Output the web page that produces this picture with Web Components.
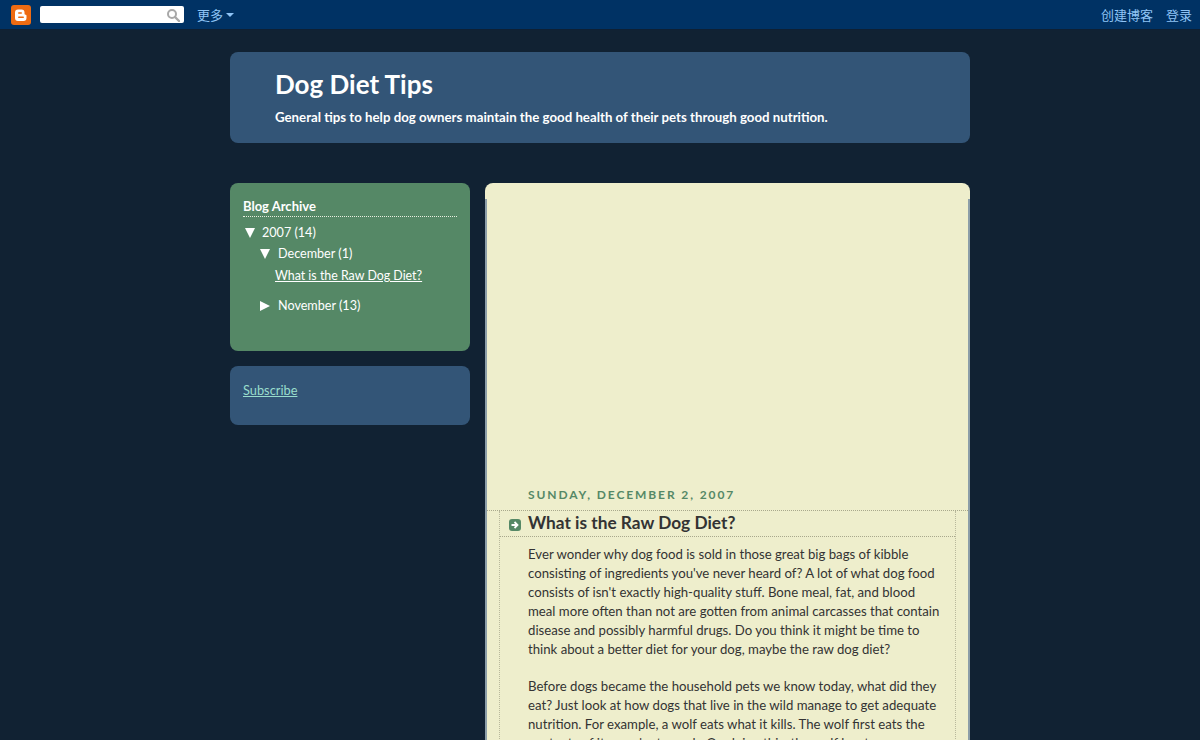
<!DOCTYPE html>
<html>
<head>
<meta charset="utf-8">
<title>Dog Diet Tips</title>
<style>
  html, body { margin: 0; height: 100%; overflow: hidden; background: #112233; }
  body { font-family: Lato, "Open Sans", "Liberation Sans", sans-serif; font-size: 13px; }
</style>
</head>
<body>
<blog-navbar></blog-navbar>
<blog-page>
  <blog-header slot="header" title="Dog Diet Tips" description="General tips to help dog owners maintain the good health of their pets through good nutrition."></blog-header>
  <side-box slot="side" tone="green">
    <blog-archive></blog-archive>
  </side-box>
  <side-box slot="side" tone="blue">
    <subscribe-link></subscribe-link>
  </side-box>
  <blog-post slot="main" date="SUNDAY, DECEMBER 2, 2007" title="What is the Raw Dog Diet?">
    <p>Ever wonder why dog food is sold in those great big bags of kibble<br>consisting of ingredients you've never heard of? A lot of what dog food<br>consists of isn't exactly high-quality stuff. Bone meal, fat, and blood<br>meal more often than not are gotten from animal carcasses that contain<br>disease and possibly harmful drugs. Do you think it might be time to<br>think about a better diet for your dog, maybe the raw dog diet?</p>
    <p>Before dogs became the household pets we know today, what did they<br>eat? Just look at how dogs that live in the wild manage to get adequate<br>nutrition. For example, a wolf eats what it kills. The wolf first eats the<br>contents of its prey's stomach. On doing this, the wolf has to</p>
  </blog-post>
</blog-page>

<script>
class BlogNavbar extends HTMLElement {
  constructor() {
    super();
    this.attachShadow({ mode: 'open' });
    this.shadowRoot.innerHTML = `
      <style>
        :host { display: flex; align-items: center; height: 29px; background: #003264; border-bottom: 1px solid #0e2034;
          font-family: "Noto Sans CJK SC", sans-serif; font-size: 13px; color: #8fc4f5; }
        .logo { display: block; margin-left: 11px; width: 20px; height: 20px; }
        .search { display: flex; align-items: center; justify-content: flex-end; box-sizing: border-box;
          width: 144px; height: 17px; margin-left: 9px; padding-right: 4px; background: #fff; border-radius: 2px; }
        .more { margin-left: 13px; display: flex; align-items: center; gap: 3px; }
        .caret { width: 0; height: 0; border: 4px solid transparent; border-top: 4px solid #8fc4f5; border-bottom: 0; }
        .right { margin-left: auto; display: flex; gap: 13px; padding-right: 8px; }
      </style>
      <svg class="logo" viewBox="0 0 20 20">
        <rect width="20" height="20" rx="3" fill="#ee6b12"/>
        <path d="M7 4.5h3.5a3 3 0 0 1 3 3v1a1.2 1.2 0 0 0 1.2 1.2 1 1 0 0 1 .8 1v2.3a3 3 0 0 1-3 3H7a3 3 0 0 1-3-3v-5.5a3 3 0 0 1 3-3z" fill="#fff"/>
        <rect x="7" y="7.2" width="4" height="1.6" rx=".8" fill="#ee6b12"/>
        <rect x="7" y="11.4" width="6" height="1.6" rx=".8" fill="#ee6b12"/>
      </svg>
      <div class="search">
        <svg width="14" height="14" viewBox="0 0 14 14" fill="none" stroke="#a8a8a8">
          <circle cx="6" cy="6" r="4" stroke-width="2"/>
          <path d="M9 9l4 4" stroke-width="2.4" stroke-linecap="round"/>
        </svg>
      </div>
      <div class="more">更多<span class="caret"></span></div>
      <div class="right"><span>创建博客</span><span>登录</span></div>
    `;
  }
}
customElements.define('blog-navbar', BlogNavbar);

class BlogPage extends HTMLElement {
  constructor() {
    super();
    this.attachShadow({ mode: 'open' });
    this.shadowRoot.innerHTML = `
      <style>
        :host { display: block; width: 740px; margin: 22px auto 0; }
        .cols { display: flex; justify-content: space-between; margin-top: 40px; }
        .side { width: 240px; display: flex; flex-direction: column; gap: 15px; }
        .main { width: 485px; }
      </style>
      <slot name="header"></slot>
      <div class="cols">
        <div class="side"><slot name="side"></slot></div>
        <div class="main"><slot name="main"></slot></div>
      </div>
    `;
  }
}
customElements.define('blog-page', BlogPage);

class BlogHeader extends HTMLElement {
  constructor() {
    super();
    this.attachShadow({ mode: 'open' });
  }
  connectedCallback() {
    this.shadowRoot.innerHTML = `
      <style>
        :host { display: block; box-sizing: border-box; height: 91px; padding: 14px 45px 0; background: #335577; border-radius: 8px; color: #fff; }
        h1 { margin: 0; font-size: 26px; line-height: 36px; font-weight: 700; }
        p { margin: 5px 0 0; font-size: 13.25px; line-height: 20px; font-weight: 700; }
      </style>
      <h1>${this.getAttribute('title')}</h1>
      <p>${this.getAttribute('description')}</p>
    `;
  }
}
customElements.define('blog-header', BlogHeader);

class SideBox extends HTMLElement {
  constructor() {
    super();
    this.attachShadow({ mode: 'open' });
    this.shadowRoot.innerHTML = `
      <style>
        :host { display: block; box-sizing: border-box; padding: 14px 13px 0; border-radius: 8px; color: #fff; }
        :host([tone="green"]) { height: 168px; background: #558866; }
        :host([tone="blue"]) { height: 59px; background: #335577; }
      </style>
      <slot></slot>
    `;
  }
}
customElements.define('side-box', SideBox);

class BlogArchive extends HTMLElement {
  constructor() {
    super();
    this.attachShadow({ mode: 'open' });
    this.shadowRoot.innerHTML = `
      <style>
        :host { display: block; font-size: 12.6px; }
        h2 { margin: 0; padding-bottom: 1px; font-size: 13px; line-height: 18px; font-weight: 700; border-bottom: 1px dotted #e8f0e0; }
        .row { display: flex; align-items: center; height: 21px; }
        .tri { width: 19px; flex: none; }
        .y { margin-top: 5px; }
        .m { margin-left: 16px; }
        .nov { margin-top: 8px; }
        a { display: block; margin: 1px 0 0 32px; font-size: 12.4px; line-height: 22px; color: #fff; text-decoration: underline; }
        svg { display: block; }
      </style>
      <h2>Blog Archive</h2>
      <div class="row y"><span class="tri"><svg width="13" height="10"><path d="M2 0h10L7 10z" fill="#fff"/></svg></span>2007 (14)</div>
      <div class="row m"><span class="tri"><svg width="12" height="10"><path d="M1 0h10L6 10z" fill="#fff"/></svg></span>December (1)</div>
      <a href="#">What is the Raw Dog Diet?</a>
      <div class="row m nov"><span class="tri"><svg width="11" height="10"><path d="M1 0l10 5-10 5z" fill="#fff"/></svg></span>November (13)</div>
    `;
  }
}
customElements.define('blog-archive', BlogArchive);

class SubscribeLink extends HTMLElement {
  constructor() {
    super();
    this.attachShadow({ mode: 'open' });
    this.shadowRoot.innerHTML = `
      <style>
        :host { display: block; margin-top: 1px; font-size: 12.8px; line-height: 18px; }
        a { color: #99ddcc; text-decoration: underline; }
      </style>
      <a href="#">Subscribe</a>
    `;
  }
}
customElements.define('subscribe-link', SubscribeLink);

class BlogPost extends HTMLElement {
  constructor() {
    super();
    this.attachShadow({ mode: 'open' });
  }
  connectedCallback() {
    this.shadowRoot.innerHTML = `
      <style>
        :host { display: block; padding-top: 16px; background: #eeeecc; border-radius: 8px 8px 0 0; }
        .frame { border-left: 2px solid #8c9ea8; border-right: 2px solid #8c9ea8; height: 600px; }
        .date { margin: 0; padding: 287px 0 0 41px; font-size: 12px; line-height: 18px;
          font-weight: 700; letter-spacing: 1.9px; color: #558866; border-bottom: 1px dotted #a8a88c; }
        .date span { display: block; height: 24px; }
        .post { margin: 0 12px; border-left: 1px dotted #b8b89c; border-right: 1px dotted #b8b89c; height: 400px; }
        h3 { position: relative; margin: 0; padding-left: 28px; height: 25px; font-size: 17.3px; line-height: 24px; font-weight: 700; color: #333;
          border-bottom: 1px dotted #a8a88c; }
        .arrow { position: absolute; left: 9px; top: 8px; }
        .body { padding: 8px 0 0 28px; font-size: 13.2px; line-height: 19px; color: #333; }
        ::slotted(p) { margin: 0 0 18px; white-space: nowrap; }
      </style>
      <div class="frame">
        <div class="date"><span>${this.getAttribute('date')}</span></div>
        <div class="post">
          <h3>
            <svg class="arrow" width="12" height="12" viewBox="0 0 12 12">
              <rect width="12" height="12" rx="3" fill="#558866"/>
              <path d="M2.5 6h5M5.5 3l3 3-3 3" fill="none" stroke="#fff" stroke-width="1.8"/>
            </svg>${this.getAttribute('title')}</h3>
          <div class="body"><slot></slot></div>
        </div>
      </div>
    `;
  }
}
customElements.define('blog-post', BlogPost);
</script>
</body>
</html>
